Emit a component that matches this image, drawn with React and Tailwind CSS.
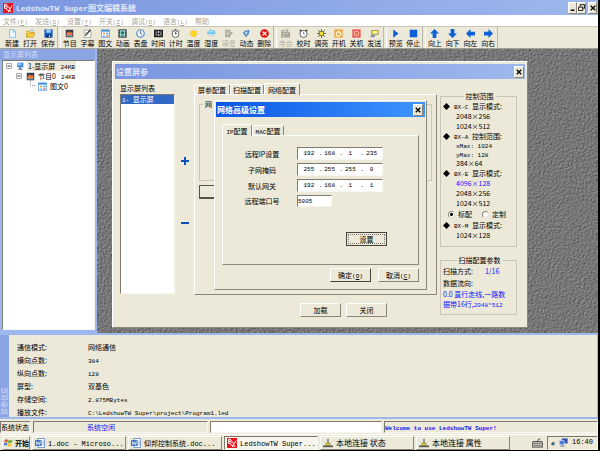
import { useState } from 'react'

const RAISED = 'border border-t-white border-l-white border-b-[#8a8778] border-r-[#8a8778] bg-[#ece9d8]'
const SUNKEN = 'border border-t-[#7d7b70] border-l-[#7d7b70] border-b-[#f8f6ee] border-r-[#f8f6ee]'

const MENUS = [
  ['文件', 'F'], ['发送', 'S'], ['设置', 'Y'], ['开关', 'Z'], ['调试', 'D'], ['语言', 'L'], ['帮助', ''],
]

const ICONS = {
  page: <path d="M2 .5h5.500l2.500 3v8H2z M7 .5v3.500h3" fill="#e8f7ff" stroke="#7ab8dc" />,
  folder: <><path d="M.5 11V3h4l1 1.500h5V6" fill="#ffe27a" stroke="#c99518" /><path d="M.5 11 3 5.500h8.500L9.500 11z" fill="#ffd24a" stroke="#c99518" /><path d="M6 2q2-2 4 1" fill="none" stroke="#4a9be0" /></>,
  disk: <><path d="M.5.5h11v11H.5z" fill="#1d5fc4" /><path d="M3 .5h6V5H3z" fill="#9fd0ff" /><path d="M3 7.500h6v4H3z" fill="#0a2c70" /><path d="M6.500 8.500h1.500V11H6.500z" fill="#fff" /></>,
  program: <><path d="M1 1h10v10H1z" fill="#333c4c" /><path d="M2 6l3-3 2 2 2-1 1 2v2H2z" fill="#ef7a3c" /><path d="M2 8h8v2H2z" fill="#8a939c" /></>,
  caption: <><path d="M1.500 1.500h9v10h-9z" fill="#fff" stroke="#999" /><path d="M3 9 10 1" stroke="#333" strokeWidth="1.600" /><path d="M3 5h3M3 7h2" stroke="#888" /></>,
  table: <><path d="M.5 1.500h11v9.500H.5z" fill="#fff" stroke="#3f8fe0" /><path d="M.5 1h11v2.500H.5z" fill="#3f8fe0" /><path d="M2.500 5h3v2h-3z" fill="#e59a3a" /><path d="M7 5h3v2H7zM2.500 8.500h3V10h-3z" fill="#4aa0e8" /><path d="M7 8.500h3V10H7z" fill="#d34b3c" /></>,
  anim: <><path d="M.5.5h11v11H.5z" fill="#222" /><path d="M2.500 1.500h7v9h-7z" fill="#8fd4c8" /><circle cx="6" cy="5" r="2" fill="#27635c" /><path d="M3.500 10q2.500-4 5 0z" fill="#27635c" /><path d="M1.500 1v10M10.500 1v10" stroke="#ddd" strokeDasharray="1 1" /></>,
  clock: <><circle cx="6" cy="6" r="5" fill="#eef5ff" stroke="#4d7fc8" strokeWidth="1.500" /><path d="M6 2.500V6l2.500 1.500" fill="none" stroke="#24468c" /></>,
  time: <><path d="M0 1h12v10H0z" fill="#222" /><path d="M2 3h2v6H2zM8 3h2v6H8z" fill="#777" /><path d="M5 3h2v2H5zM5 7h2v2H5z" fill="#fff" /></>,
  timer: <><circle cx="6" cy="6.800" r="4.500" fill="#fff" stroke="#333" /><path d="M6 4v3l2-1.500M4.500.7h3M9.500 1.500l1.500 1.500M2.500 1.500 1 3" fill="none" stroke="#333" /></>,
  sun: <><path d="M6 0 7.500 3 11 2 9.500 5 12 6.500 9 8 9.500 11 6 9.500 3 11 3 8 0 6.500 3 5 1 2 4.500 3z" fill="#ffc51a" /><circle cx="6" cy="6" r="3" fill="#ffd91a" /></>,
  cloud: <><path d="M2 7a2 2 0 0 1 0-4q3-4 6-1 4 0 3.500 3T9 7z" fill="#6cc8f4" /><path d="M3 4q3-2 5 0" fill="none" stroke="#e6f8ff" /><path d="M3 8v2M6 8v3M9 8v2" stroke="#8fc9e8" /></>,
  noise: <><path d="M1.500 1h7v10h-7z" fill="#aaa89c" /><path d="M3 4h4M3 6h4M3 8h3" stroke="#e8e6da" /><path d="m8 8 3-4" stroke="#aaa89c" strokeWidth="2" /></>,
  dynamic: <><path d="M1 5q3-4 9-3.500-.5 7-5 8.500z" fill="#3f86c8" /><path d="M3 5l5-2-2 5z" fill="#bfe2f8" /><path d="M4 9l2 2" stroke="#666" /></>,
  remove: <><circle cx="6" cy="6" r="5.800" fill="#e01010" /><path d="m3.500 3.500 5 5m0-5-5 5" stroke="#fff" strokeWidth="1.800" /></>,
  radio: <><path d="M0 4h12v7.500H0z" fill="#aaa89c" /><path d="M1 4V2h3v2M7 4V1h2v3" fill="none" stroke="#aaa89c" strokeWidth="1.500" /><path d="M2 6h3M7 6h3M2 9h3" stroke="#dddbd0" /></>,
  alarm: <><circle cx="6" cy="6.500" r="4.800" fill="#fff" stroke="#333" /><circle cx="2" cy="2" r="1.500" fill="#555" /><circle cx="10" cy="2" r="1.500" fill="#555" /><path d="M6 3.500v3.200h2" fill="none" stroke="#57a" /></>,
  bright: <><path d="M6 0v12M0 6h12M1.500 1.500l9 9M10.500 1.500l-9 9" stroke="#3f3f1c" /><circle cx="6" cy="6" r="3" fill="#f5e52a" stroke="#5a5210" /></>,
  on: <><path d="M.5.5h11v11H.5z" fill="#f8a13c" /><circle cx="6" cy="6.500" r="3" fill="none" stroke="#fff8d0" strokeWidth="1.500" /><path d="M6 2v4" stroke="#fff8d0" strokeWidth="1.500" /></>,
  off: <><path d="M.5.5h11v11H.5z" fill="#ee4f5c" /><circle cx="6" cy="6" r="3.200" fill="none" stroke="#ffd9a0" strokeWidth="1.300" /><circle cx="6" cy="6" r="1" fill="#ffd9a0" /></>,
  send: <><path d="M2 2h9v5H2z" fill="#f6e64c" stroke="#8c8a3a" /><path d="M4 3.500h5v2H4z" fill="#fff" /><path d="M1 8h6l-1 3H1z" fill="#7c94b0" /></>,
  play: <path d="M3 .5 10 6 3 11.500z" fill="#0b62d6" />,
  stop: <path d="M1 1h10v10H1z" fill="#0b62d6" />,
  up: <path d="M6 0 12 6H8.500v6h-5V6H0z" fill="#0b62d6" />,
  down: <path d="M6 12 0 6h3.500V0h5v6H12z" fill="#0b62d6" />,
  left: <path d="M0 6 6 0v3.500h6v5H6V12z" fill="#0b62d6" />,
  right: <path d="M12 6 6 12V8.500H0v-5h6V0z" fill="#0b62d6" />,
  screen: <><path d="M2 1h9v7H2z" fill="#3d8be0" /><path d="M3 2h5v3H3z" fill="#9bd0fb" /><path d="M5 8h3v2H5zM3 10h7v1.500H3z" fill="#6f7b88" /></>,
  word: <><path d="M3.500.5h8v11h-8z" fill="#fff" stroke="#5a83c8" /><path d="M0 2.500h8v7H0z" fill="#3f6fc4" /><path d="m1.500 4 1 4L4 5l1.500 3 1-4" fill="none" stroke="#fff" /><path d="M9 4h1.500M9 6h1.500M9 8h1.500" stroke="#5a83c8" /></>,
  net: <><path d="M6 1v6" stroke="#888" strokeWidth="2" /><path d="M3.500 6h5v3h-5z" fill="#e6cf3c" stroke="#777120" strokeWidth=".6" /><path d="M0 10h12" stroke="#555" strokeWidth="2" /></>,
  flag: <><path d="M1 2.500q2-1.500 4.300 0L4.500 6Q2.500 4.800.3 6z" fill="#e8502c" /><path d="M6 2.800q2.500 1 5.500-.5L10.500 6Q8 7 5.200 6.200z" fill="#5fb13c" /><path d="M.2 6.800q2-1.200 4.200 0L3.500 10Q1.500 9-.5 10z" fill="#3f7fe0" /><path d="M5 7q3 1 5.400 0L9.500 10.500q-3 1-5.300 0z" fill="#f5c22c" /></>,
  keyboard: <><path d="M1 5h10l1 6H0z" fill="#c9c7bc" stroke="#44443e" /><path d="M2 7h8M2 9h8" stroke="#44443e" strokeDasharray="1 .8" /><path d="M6 5q0-3 3-3" fill="none" stroke="#44443e" /></>,
  monitors: <><path d="M4 .5h7.500V7H4z" fill="#2d4fb0" stroke="#8090c0" /><path d="M.5 3.500H7V9H.5z" fill="#4a78d8" stroke="#c8d0e8" /><path d="M2 10h5v1.500H2z" fill="#6a6f90" /></>,
}

const TOOLS = [
  { width: 'ml-[3px] w-[54px]', items: [['page', '新建'], ['folder', '打开'], ['disk', '保存']] },
  { width: 'w-[212px]', items: [['program', '节目'], ['caption', '字幕'], ['table', '图文'], ['anim', '动画'], ['clock', '表盘'], ['time', '时间'], ['timer', '计时'], ['sun', '温度'], ['cloud', '湿度'], ['noise', '噪音', true], ['dynamic', '动态'], ['remove', '删除']] },
  { width: 'w-[106px]', items: [['radio', '电台', true], ['alarm', '校时'], ['bright', '调亮'], ['on', '开机'], ['off', '关机'], ['send', '发送']] },
  { width: 'w-[35px]', items: [['play', '预览'], ['stop', '停止']] },
  { width: 'w-[71px]', items: [['up', '向上'], ['down', '向下'], ['left', '向左'], ['right', '向右']] },
]

const INFO = [
  ['通信模式:', '网络通信'],
  ['横向点数:', '384'],
  ['纵向点数:', '128'],
  ['屏型:', '双基色'],
  ['存储空间:', '2.875MBytes'],
  ['播放文件:', 'C:\\LedshowTW Super\\project\\Program1.led'],
]

const ADDRESSES = [
  { id: 'ip', label: '远程IP设置', parts: [192, 168, 1, 235] },
  { id: 'mask', label: '子网掩码', parts: [255, 255, 255, 0] },
  { id: 'gateway', label: '默认网关', parts: [192, 168, 1, 1] },
]

const TASKS = [
  { icon: 'word', en: '1.doc - Microso...' },
  { icon: 'word', text: '仰邦控制系统', en: '.doc...' },
  { icon: 'logo', en: 'LedshowTW Super...', active: true },
  { icon: 'net', text: '本地连接 状态' },
  { icon: 'net', text: '本地连接 属性' },
]

function Icon({ name, className = 'size-[9px]' }) {
  return <svg viewBox="0 0 12 12" className={`${className} shrink-0`} aria-hidden="true">{ICONS[name]}</svg>
}

function Logo() {
  return (
    <svg viewBox="0 0 12 12" className="size-[10px] shrink-0" aria-hidden="true">
      <path d="M0 0h12v12H0z" fill="#e8141c" />
      <path d="M2 1.500v5h2.500q1.500-1.200 0-2.500 1.200-1.500-.5-2.500zM2 4h2.500M6 4l2.500 3L11 3M8.500 7 6.500 11M4 8l6 2" fill="none" stroke="#fff" strokeWidth="1.200" />
    </svg>
  )
}

// Latin text next to Chinese runs at the half-width of the 7px glyphs
function En({ children, className = 'text-[6px]' }) {
  return <span className={`font-['Liberation_Mono',monospace] leading-none whitespace-pre ${className}`}>{children}</span>
}

function CloseGlyph() {
  return <svg viewBox="0 0 8 8" className="size-[6px]" aria-hidden="true"><path d="m1 1 6 6m0-6L1 7" stroke="#000" strokeWidth="1.800" /></svg>
}

function WinButton({ label, children }) {
  return (
    <button aria-label={label} className={`flex h-[12px] w-[9px] shrink-0 items-center justify-center ${RAISED}`}>
      {children}
    </button>
  )
}

function PushButton({ children, className = '' }) {
  return <button className={`h-[14px] w-[41px] ${RAISED} ${className}`}>{children}</button>
}

function Tabs({ tabs, value, onChange }) {
  return (
    <div role="tablist" className="flex h-[11px] items-end">
      {tabs.map(tab => (
        <button key={tab.name} role="tab" aria-selected={value === tab.name} onClick={() => onChange(tab.name)}
          className={`${tab.width} rounded-t-[2px] border-t border-l border-r border-t-white border-l-white border-r-[#8a8778] bg-[#ece9d8]
            ${value === tab.name ? 'relative -mb-px h-[12px]' : 'h-[10px]'}`}>
          {tab.label}
        </button>
      ))}
    </div>
  )
}

function Toolbar() {
  return (
    <div className="flex h-[23px] border-t border-[#c9c6b8] border-b border-b-[#a5a294]">
      {TOOLS.map((group, i) => (
        <div key={i} className="flex">
          <div className={`flex ${group.width}`}>
            {group.items.map(([icon, label, disabled]) => (
              <button key={label} disabled={disabled}
                className="flex min-w-0 flex-1 flex-col items-center gap-px pt-[2px] whitespace-nowrap disabled:text-[#b5b2a4]">
                <Icon name={icon} />
                <span className="leading-[8px]">{label}</span>
              </button>
            ))}
          </div>
          <div className={`border-l border-[#bdbaab] ${i < 4 ? 'w-[4px] border-r border-r-white' : ''}`} />
        </div>
      ))}
    </div>
  )
}

function Expander() {
  return (
    <svg viewBox="0 0 7 7" className="size-[7px] shrink-0" aria-hidden="true">
      <path d="M.5.5h5v5h-5z" fill="#fff" stroke="#aaa" /><path d="M1.500 3h3" stroke="#333" />
    </svg>
  )
}

function Tree() {
  return (
    <aside className="flex w-[97px] shrink-0 flex-col bg-[#9db8ee] pr-[2px] pb-[3px]">
      <h2 className="h-[11px] bg-[#8ba5e4] pl-[3px] leading-[10px] text-[#d3dcf3]">显示屏列表</h2>
      <ul className={`ml-[2px] flex-1 bg-white ${SUNKEN} leading-[10px]`}>
        <li className="flex items-center gap-[3px] pl-[3px]">
          <Expander /><Icon name="screen" className="size-[8px]" />
          <span className="bg-[#ece9d8] px-px">1-显示屏 <En> 24KB</En></span>
        </li>
        <li className="flex items-center gap-[3px] pl-[13px]">
          <Expander /><Icon name="program" />
          <span>节目0 <En> 24KB</En></span>
        </li>
        <li className="flex items-center gap-[3px] pl-[27px]">
          <span className="-mt-[6px] h-[6px] w-[5px] shrink-0 border-b border-l border-dotted border-[#999]" />
          <Icon name="table" />
          <span>图文0</span>
        </li>
      </ul>
    </aside>
  )
}

function Texture() {
  return (
    <svg className="absolute inset-0 size-full" aria-hidden="true">
      <filter id="stone" x="0" y="0" width="100%" height="100%" colorInterpolationFilters="sRGB">
        <feTurbulence type="fractalNoise" baseFrequency="0.6 0.7" numOctaves="2" seed="4" />
        <feColorMatrix values="0 0 0 0 0  0 0 0 0 0  0 0 0 0 0  1 0 0 0 0" />
        <feDiffuseLighting surfaceScale="0.800" lightingColor="#a8a8a8">
          <feDistantLight azimuth="225" elevation="45" />
        </feDiffuseLighting>
      </filter>
      <rect width="100%" height="100%" filter="url(#stone)" />
    </svg>
  )
}

function ModeHead({ children }) {
  return (
    <h3 className="flex h-[10px] items-center gap-[4px] whitespace-nowrap">
      <svg viewBox="0 0 7 7" className="size-[7px] shrink-0" aria-hidden="true"><path d="M3.500 0 7 3.500 3.500 7 0 3.500z" /></svg>
      <span>{children}</span>
    </h3>
  )
}

function Radio({ label, ...props }) {
  return (
    <label className="flex items-center gap-[3px]">
      <input type="radio" name="variant" {...props}
        className="size-[7px] appearance-none rounded-full border border-[#8a8778] border-r-[#e6e3d6] border-b-[#e6e3d6] bg-white checked:bg-[radial-gradient(#000_1px,#fff_2px)]" />
      {label}
    </label>
  )
}

function RangePanel() {
  return (
    <div className="flex w-[77px] flex-col gap-[8px]">
      <fieldset className="border border-[#c9c6b8] pb-[6px] pl-[2px]">
        <legend className="mx-auto px-[2px] leading-[10px]">控制范围</legend>
        <ModeHead><En>BX-C </En>显示模式:</ModeHead>
        <p className="pl-[13px] leading-[10px]">2048×256</p>
        <p className="pl-[13px] leading-[10px]">1024×512</p>
        <ModeHead><En>BX-A </En>控制范围:</ModeHead>
        <p className="pl-[13px] leading-[9px]"><En>xMax: 1024</En></p>
        <p className="pl-[13px] leading-[9px]"><En>yMax: 128</En></p>
        <p className="pl-[13px] leading-[9px]">384×64</p>
        <ModeHead><En>BX-E </En>显示模式:</ModeHead>
        <p className="pl-[13px] leading-[10px] text-[#1414ff]">4096×128</p>
        <p className="pl-[13px] leading-[10px]">2048×256</p>
        <p className="pl-[13px] leading-[10px]">1024×512</p>
        <div className="flex h-[12px] items-center gap-[10px] pl-[5px] whitespace-nowrap">
          <Radio label="标配" defaultChecked />
          <Radio label="定制" />
        </div>
        <ModeHead><En>BX-M </En>显示模式:</ModeHead>
        <p className="pl-[13px] leading-[10px]">1024×128</p>
      </fieldset>
      <fieldset className="border border-[#c9c6b8] pb-[5px] pl-[2px]">
        <legend className="mx-auto px-[2px] leading-[10px]">扫描配置参数</legend>
        <p className="leading-[12px]">扫描方式:<span className="ml-[12px] text-[#1414ff]">1/16</span></p>
        <p className="leading-[12px]">数据流向:</p>
        <p className="leading-[10px] whitespace-nowrap text-[#1414ff]">0.0 直行走线,一路数<br />据带16行,<En>2048*512</En></p>
      </fieldset>
    </div>
  )
}

function ScreenDialog() {
  const [tab, setTab] = useState('net')
  return (
    <section className={`absolute top-[12px] left-[15px] w-[416px] p-[2px] ${RAISED}`}>
      <header className="flex h-[15px] items-center justify-between bg-gradient-to-r from-[#7b95e0] to-[#9db8ec] pr-px pl-px">
        <h2 className="text-[8px] font-bold text-[#dbe3f6]">设置屏参</h2>
        <button aria-label="关闭设置屏参" className={`flex h-[12px] w-[10px] items-center justify-center ${RAISED}`}><CloseGlyph /></button>
      </header>
      <div className="flex pt-[4px] pr-[8px] pb-[8px] pl-[5px]">
        <div className="flex-1">
          <div className="flex">
            <div className="w-[55px]">
              <h3 className="leading-[10px]">显示屏列表</h3>
              <ul className={`mt-px h-[200px] bg-white ${SUNKEN}`}>
                <li className="bg-[#316ac5] pl-px leading-[8px] text-white"><En>1- </En>显示屏</li>
              </ul>
            </div>
            <div className="flex w-[19px] flex-col items-center gap-[56px] pt-[74px]">
              <button aria-label="添加"><svg viewBox="0 0 8 8" className="size-[8px]"><path d="M3 0h2v3h3v2H5v3H3V5H0V3h3z" fill="#0a50c0" /></svg></button>
              <button aria-label="删除屏"><svg viewBox="0 0 8 4" className="h-[4px] w-[8px]"><path d="M0 1h8v2H0z" fill="#0a50c0" /></svg></button>
            </div>
            <div className="flex-1">
              <Tabs value={tab} onChange={setTab} tabs={[
                { name: 'screen', label: '屏参配置', width: 'w-[36px]' },
                { name: 'scan', label: '扫描配置', width: 'w-[34px]' },
                { name: 'net', label: '网络配置', width: 'w-[36px]' },
              ]} />
              <div className={`h-[201px] px-[4px] pt-[4px] ${RAISED}`}>
                <fieldset className="h-[82px] border border-[#c9c6b8] pl-[3px]">
                  <legend className="px-[2px] leading-[10px]">网</legend>
                </fieldset>
                <button aria-label="高级" className="mt-[4px] block h-[14px] w-[40px] border border-[#55534a] border-r-2 border-b-2" />
              </div>
            </div>
          </div>
          <footer className="flex justify-center gap-[5px] pt-[8px] pl-[130px]">
            <PushButton>加载</PushButton>
            <PushButton>关闭</PushButton>
          </footer>
        </div>
        <div className="pt-[8px] pl-[3px]"><RangePanel /></div>
      </div>
    </section>
  )
}

function AddressRow({ id, label, parts }) {
  return (
    <>
      <label htmlFor={id} className="text-center whitespace-nowrap">{label}</label>
      <div className={`flex h-[13px] items-center bg-white pl-px ${SUNKEN} font-['Liberation_Mono',monospace] text-[6px]`}>
        {parts.map((n, i) => (
          <span key={i} className="flex min-w-0 flex-1">
            <input id={i ? undefined : id} aria-label={i ? `${label} ${i + 1}` : undefined} defaultValue={n} className="w-full min-w-0 text-center outline-none" />
            {i < 3 && <span className="w-px">.</span>}
          </span>
        ))}
      </div>
    </>
  )
}

function NetworkDialog() {
  const [tab, setTab] = useState('ip')
  return (
    <section className={`absolute top-[51px] left-[117px] w-[213px] p-px ${RAISED}`}>
      <header className="flex h-[15px] items-center justify-between bg-gradient-to-r from-[#0a56e4] to-[#3f95ff] pr-[2px] pl-px">
        <h2 className="text-[8px] font-bold text-white">网络高级设置</h2>
        <button aria-label="关闭网络高级设置" className={`flex h-[12px] w-[10px] items-center justify-center ${RAISED}`}><CloseGlyph /></button>
      </header>
      <div className="px-[6px] pt-[7px]">
        <Tabs value={tab} onChange={setTab} tabs={[
          { name: 'ip', label: <><En>IP</En>配置</>, width: 'w-[30px]' },
          { name: 'mac', label: <><En>MAC</En>配置</>, width: 'w-[32px]' },
        ]} />
        <div className={`flex h-[130px] flex-col pt-[11px] ${RAISED}`}>
          <div className="ml-[18px] grid w-[142px] grid-cols-[42px_86px] items-center gap-x-[14px] gap-y-[3px]">
            {ADDRESSES.map(row => <AddressRow key={row.id} {...row} />)}
            <label htmlFor="port" className="text-center whitespace-nowrap">远程端口号</label>
            <input id="port" defaultValue="5005" className={`h-[12px] w-[35px] bg-white font-['Liberation_Mono',monospace] text-[6px] outline-none ${SUNKEN}`} />
          </div>
          <div className="mt-auto mr-[31px] mb-[18px] flex justify-end">
            <button className="h-[14px] w-[41px] border border-[#44423a] p-px">
              <span className="block h-full border border-dotted border-[#77756a] leading-[8px]">设置</span>
            </button>
          </div>
        </div>
        <footer className="flex justify-end gap-[7px] pt-[3px] pb-[6px]">
          <PushButton className="border-t-[#77756a] border-l-[#77756a] border-r-[#44423a] border-b-[#44423a]">确定<En>(<u>O</u>)</En></PushButton>
          <PushButton>取消<En>(<u>C</u>)</En></PushButton>
        </footer>
      </div>
    </section>
  )
}

function InfoPanel() {
  return (
    <section className="flex bg-[#9db8ee] pt-[2px] pr-px pb-[2px]">
      <h2 className="flex w-[9px] rotate-180 items-center bg-[#8ba5e4] pt-[2px] leading-[9px] text-[#d3dcf3] [writing-mode:vertical-rl] [text-orientation:sideways]">屏参信息</h2>
      <dl className="grid h-[82px] flex-1 auto-rows-[13px] grid-cols-[71px_1fr] bg-[#ece9d8] pt-[6px] pl-[8px] leading-[13px]">
        {INFO.map(([name, value]) => (
          <div key={name} className="contents">
            <dt>{name}</dt>
            <dd>{/^[\x20-\x7e]+$/.test(value) ? <En>{value}</En> : value}</dd>
          </div>
        ))}
      </dl>
    </section>
  )
}

function Taskbar() {
  return (
    <nav className="flex h-[16px] shrink-0 items-center gap-[2px] border-t border-white pl-[2px]">
      <button className={`flex h-[14px] w-[28px] items-center gap-[2px] pl-px font-bold whitespace-nowrap ${RAISED}`}>
        <Icon name="flag" />开始
      </button>
      {TASKS.map((task, i) => (
        <button key={i}
          className={`flex h-[14px] w-[94px] items-center gap-[3px] pl-[2px] whitespace-nowrap ${task.active ? `bg-[#f6f4ec] ${SUNKEN}` : RAISED}`}>
          {task.icon === 'logo' ? <Logo /> : <Icon name={task.icon} className="size-[10px]" />}
          {task.en ? <span>{task.text}<En className="text-[7px]">{task.en}</En></span> : <span className="text-[8px]">{task.text}</span>}
        </button>
      ))}
      <div className="ml-auto flex h-full items-center gap-[4px]">
        <Icon name="keyboard" className="size-[11px]" />
        <div className={`flex h-[14px] w-[51px] items-center justify-between pr-[4px] pl-[3px] ${SUNKEN}`}>
          <span className="text-[8px] font-bold">«</span>
          <Icon name="monitors" />
          <En className="text-[7px]">16:40</En>
        </div>
      </div>
    </nav>
  )
}

export default function App() {
  return (
    <div className="flex min-h-screen flex-col border-r-2 border-b border-black bg-[#ece9d8] font-['Noto_Sans_CJK_SC',sans-serif] text-[7px] leading-[10px] text-black">
      <header className="flex h-[15px] items-center bg-gradient-to-r from-[#7b95e0] to-[#9db8ec] pr-px pl-[3px]">
        <Logo />
        <h1 className="ml-[3px] text-[8px] font-bold text-[#e2e9f8]"><En className="text-[8px]">LedshowTW Super</En>图文编辑系统</h1>
        <div className="ml-auto flex">
          <WinButton label="最小化"><svg viewBox="0 0 8 8" className="size-[6px]"><path d="M1 6h5v2H1z" /></svg></WinButton>
          <WinButton label="还原"><svg viewBox="0 0 8 8" className="size-[7px]"><path d="M2.500 3V.8h5v4H6M.5 3.500h5v4h-5z" fill="none" stroke="#000" /></svg></WinButton>
          <span className="w-[2px]" />
          <WinButton label="关闭"><CloseGlyph /></WinButton>
        </div>
      </header>
      <nav className="flex h-[11px] bg-white pl-[3px] text-[#a9a69a]">
        {MENUS.map(([name, key]) => (
          <button key={name} className="w-[32px] text-left whitespace-nowrap">{name}{key && <En>(<u>{key}</u>)</En>}</button>
        ))}
      </nav>
      <Toolbar />
      <main className="flex min-h-[284px] flex-1">
        <Tree />
        <div className="relative flex-1 overflow-hidden">
          <Texture />
          <ScreenDialog />
          <NetworkDialog />
        </div>
      </main>
      <InfoPanel />
      <footer className="flex h-[15px] shrink-0 items-center gap-[2px] pt-px leading-[10px]">
        <span className={`h-[12px] w-[31px] ${SUNKEN}`}>系统状态</span>
        <span className={`h-[12px] w-[175px] pl-[53px] text-[#1414ff] ${SUNKEN}`}>系统空闲</span>
        <span className={`h-[12px] w-[172px] bg-white ${SUNKEN}`} />
        <span className={`h-[12px] flex-1 font-bold text-[#1414ff] ${SUNKEN}`}><En>Welcome to use LedshowTW Super!</En></span>
      </footer>
      <Taskbar />
    </div>
  )
}
